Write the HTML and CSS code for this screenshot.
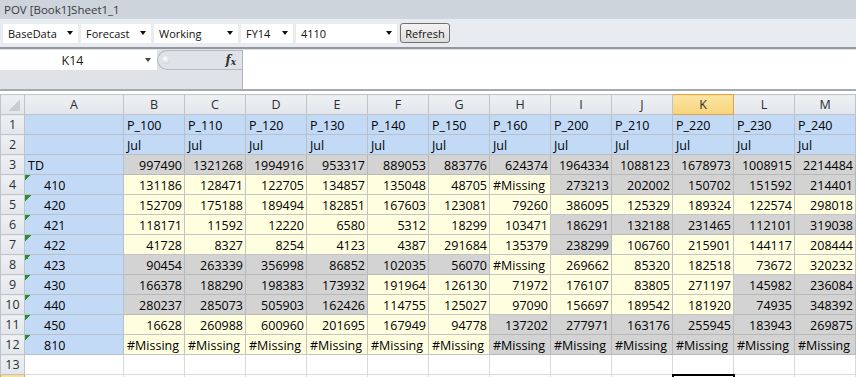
FILE: index.html
```html
<!DOCTYPE html>
<html lang="en">
<head>
    <meta charset="UTF-8">
    <title>POV [Book1]Sheet1_1</title>
    <link rel="stylesheet" href="styles.css">
</head>
<body>

    <!-- POV toolbar -->
    <div class="pov-title">POV [Book1]Sheet1_1</div>
    <div class="pov-bar">
        <div class="dd dd-base"><span>BaseData</span><i class="arrow"></i></div>
        <div class="dd dd-scen"><span>Forecast</span><i class="arrow"></i></div>
        <div class="dd dd-ver"><span>Working</span><i class="arrow"></i></div>
        <div class="dd dd-year"><span>FY14</span><i class="arrow"></i></div>
        <div class="dd dd-ent"><span>4110</span><i class="arrow"></i></div>
        <button class="refresh">Refresh</button>
    </div>

    <!-- formula bar -->
    <div class="fbar">
        <div class="namebox"><span class="cellref">K14</span><i class="arrow"></i></div>
        <div class="fx-panel"><span class="grip"></span><span class="fx">f<sub>x</sub></span></div>
        <div class="finput"></div>
    </div>

    <!-- sheet -->
    <table class="grid">
        <colgroup>
            <col class="c-rh"><col class="c-a">
            <col class="c-n"><col class="c-n"><col class="c-n"><col class="c-n"><col class="c-n"><col class="c-n">
            <col class="c-n"><col class="c-n"><col class="c-n"><col class="c-n"><col class="c-n"><col class="c-n">
        </colgroup>
        <tr class="hdr">
            <th class="corner"></th><th>A</th><th>B</th><th>C</th><th>D</th><th>E</th><th>F</th><th>G</th>
            <th>H</th><th>I</th><th>J</th><th class="sel">K</th><th>L</th><th>M</th>
        </tr>
        <tr>
            <th class="rh">1</th><td class="m"></td>
            <td class="m">P_100</td><td class="m">P_110</td><td class="m">P_120</td><td class="m">P_130</td>
            <td class="m">P_140</td><td class="m">P_150</td><td class="m">P_160</td><td class="m">P_200</td>
            <td class="m">P_210</td><td class="m">P_220</td><td class="m">P_230</td><td class="m">P_240</td>
        </tr>
        <tr>
            <th class="rh">2</th><td class="m"></td>
            <td class="m">Jul</td><td class="m">Jul</td><td class="m">Jul</td><td class="m">Jul</td>
            <td class="m">Jul</td><td class="m">Jul</td><td class="m">Jul</td><td class="m">Jul</td>
            <td class="m">Jul</td><td class="m">Jul</td><td class="m">Jul</td><td class="m">Jul</td>
        </tr>
        <tr>
            <th class="rh">3</th><td class="m">TD</td>
            <td class="r n">997490</td><td class="r n">1321268</td><td class="r n">1994916</td><td class="r n">953317</td>
            <td class="r n">889053</td><td class="r n">883776</td><td class="r n">624374</td><td class="r n">1964334</td>
            <td class="r n">1088123</td><td class="r n">1678973</td><td class="r n">1008915</td><td class="r n">2214484</td>
        </tr>
        <tr>
            <th class="rh">4</th><td class="m lbl">410</td>
            <td class="w n">131186</td><td class="w n">128471</td><td class="w n">122705</td><td class="w n">134857</td>
            <td class="w n">135048</td><td class="w n">48705</td><td class="w">#Missing</td><td class="r n">273213</td>
            <td class="r n">202002</td><td class="r n">150702</td><td class="r n">151592</td><td class="r n">214401</td>
        </tr>
        <tr>
            <th class="rh">5</th><td class="m lbl">420</td>
            <td class="w n">152709</td><td class="w n">175188</td><td class="w n">189494</td><td class="w n">182851</td>
            <td class="w n">167603</td><td class="w n">123081</td><td class="w n">79260</td><td class="w n">386095</td>
            <td class="w n">125329</td><td class="w n">189324</td><td class="w n">122574</td><td class="w n">298018</td>
        </tr>
        <tr>
            <th class="rh">6</th><td class="m lbl">421</td>
            <td class="w n">118171</td><td class="w n">11592</td><td class="w n">12220</td><td class="w n">6580</td>
            <td class="w n">5312</td><td class="w n">18299</td><td class="w n">103471</td><td class="r n">186291</td>
            <td class="r n">132188</td><td class="r n">231465</td><td class="r n">112101</td><td class="r n">319038</td>
        </tr>
        <tr>
            <th class="rh">7</th><td class="m lbl">422</td>
            <td class="w n">41728</td><td class="w n">8327</td><td class="w n">8254</td><td class="w n">4123</td>
            <td class="w n">4387</td><td class="w n">291684</td><td class="w n">135379</td><td class="r n">238299</td>
            <td class="w n">106760</td><td class="w n">215901</td><td class="w n">144117</td><td class="w n">208444</td>
        </tr>
        <tr>
            <th class="rh">8</th><td class="m lbl">423</td>
            <td class="r n">90454</td><td class="r n">263339</td><td class="r n">356998</td><td class="r n">86852</td>
            <td class="r n">102035</td><td class="r n">56070</td><td class="w">#Missing</td><td class="w n">269662</td>
            <td class="w n">85320</td><td class="w n">182518</td><td class="w n">73672</td><td class="w n">320232</td>
        </tr>
        <tr>
            <th class="rh">9</th><td class="m lbl">430</td>
            <td class="r n">166378</td><td class="r n">188290</td><td class="r n">198383</td><td class="r n">173932</td>
            <td class="w n">191964</td><td class="w n">126130</td><td class="w n">71972</td><td class="w n">176107</td>
            <td class="w n">83805</td><td class="w n">271197</td><td class="r n">145982</td><td class="r n">236084</td>
        </tr>
        <tr>
            <th class="rh">10</th><td class="m lbl">440</td>
            <td class="r n">280237</td><td class="r n">285073</td><td class="r n">505903</td><td class="r n">162426</td>
            <td class="w n">114755</td><td class="w n">125027</td><td class="w n">97090</td><td class="w n">156697</td>
            <td class="w n">189542</td><td class="w n">181920</td><td class="r n">74935</td><td class="r n">348392</td>
        </tr>
        <tr>
            <th class="rh">11</th><td class="m lbl">450</td>
            <td class="w n">16628</td><td class="w n">260988</td><td class="w n">600960</td><td class="w n">201695</td>
            <td class="w n">167949</td><td class="w n">94778</td><td class="r n">137202</td><td class="r n">277971</td>
            <td class="r n">163176</td><td class="r n">255945</td><td class="r n">183943</td><td class="r n">269875</td>
        </tr>
        <tr>
            <th class="rh">12</th><td class="m lbl">810</td>
            <td class="w">#Missing</td><td class="w">#Missing</td><td class="w">#Missing</td><td class="w">#Missing</td>
            <td class="w">#Missing</td><td class="w">#Missing</td><td class="r">#Missing</td><td class="r">#Missing</td>
            <td class="r">#Missing</td><td class="r">#Missing</td><td class="r">#Missing</td><td class="r">#Missing</td>
        </tr>
        <tr>
            <th class="rh">13</th><td></td>
            <td></td><td></td><td></td><td></td><td></td><td></td>
            <td></td><td></td><td></td><td></td><td></td><td></td>
        </tr>
        <tr>
            <th class="rh sel">14</th><td></td>
            <td></td><td></td><td></td><td></td><td></td><td></td>
            <td></td><td></td><td></td><td class="act"></td><td></td><td></td>
        </tr>
    </table>

</body>
</html>
```

FILE: styles.css
```css
body {
    margin: 0;
    width: 856px;
    height: 377px;
    overflow: hidden;
    background: #ffffff;
    font-family: "Open Sans", sans-serif;
}

/* POV toolbar */
.pov-title {
    height: 19px;
    line-height: 19px;
    padding-left: 4px;
    background: #cdd4dc;
    color: #3a3a3a;
    font-size: 11.5px;
}
.pov-bar {
    height: 28px;
    display: flex;
    align-items: center;
    gap: 3px;
    padding-left: 3px;
    background: #e8ebef;
    border-bottom: 2px solid #93989e;
}
.dd {
    height: 19px;
    box-sizing: border-box;
    display: flex;
    align-items: center;
    justify-content: space-between;
    padding: 0 5px;
    background: #ffffff;
    color: #111111;
    font-size: 11px;
}
.dd-base { width: 75px; }
.dd-scen { width: 70px; }
.dd-ver { width: 84px; }
.dd-year { width: 52px; }
.dd-ent { width: 101px; }
.arrow {
    width: 0;
    height: 0;
    border-left: 3.5px solid transparent;
    border-right: 3.5px solid transparent;
    border-top: 4px solid #111111;
}
.refresh {
    width: 50px;
    height: 20px;
    padding: 0;
    border: 1px solid #707070;
    border-radius: 3px;
    background: linear-gradient(#f4f4f4, #dddddd);
    color: #111111;
    font-family: "Open Sans", sans-serif;
    font-size: 11px;
}

/* formula bar */
.fbar {
    height: 40px;
    display: flex;
    align-items: flex-start;
    background: #dfe3e8;
    border-bottom: 2px solid #a5aaaf;
}
.namebox {
    width: 157px;
    height: 20px;
    margin-top: 1px;
    display: flex;
    align-items: center;
    background: #ffffff;
}
.cellref {
    flex: 1;
    text-align: center;
    font-size: 12.5px;
    color: #1e1e1e;
}
.namebox .arrow {
    margin-right: 6px;
    border-top-color: #444444;
}
.fx-panel {
    width: 85px;
    height: 20px;
    margin-top: 1px;
    box-sizing: border-box;
    display: flex;
    align-items: center;
    justify-content: space-between;
    padding: 0 6px 0 4px;
    border: 1px solid #b5bac0;
    border-right: none;
    border-radius: 10px 0 0 10px;
}
.grip {
    width: 8px;
    height: 8px;
    border-radius: 50%;
    background: radial-gradient(circle at 40% 35%, #ffffff, #c3c8ce);
}
.fx {
    font-family: "DejaVu Serif", serif;
    font-style: italic;
    font-weight: bold;
    font-size: 12px;
    color: #333333;
}
.fx sub {
    font-size: 9px;
    vertical-align: -1px;
}
.finput {
    flex: 1;
    height: 39px;
    margin-top: 1px;
    background: #ffffff;
    border-left: 1px solid #b0b5bb;
}

/* sheet grid */
.grid {
    margin-top: 3px;
    border-collapse: collapse;
    table-layout: fixed;
    width: 855px;
    font-size: 12.5px;
    color: #000000;
}
.c-rh { width: 24px; }
.c-a { width: 99px; }
.c-n { width: 61px; }

.grid tr {
    height: 20px;
}
.grid td,
.grid th {
    padding: 0 2px 0 3px;
    border: 1px solid #d9d9d9;
    white-space: nowrap;
    overflow: hidden;
    vertical-align: bottom;
    line-height: 17px;
    font-weight: normal;
    text-align: left;
}
.grid th {
    padding: 0;
    text-align: center;
    vertical-align: middle;
    background: linear-gradient(#eef1f4, #e2e6eb);
    border-color: #bfc4ca;
    color: #2e2e2e;
}
.grid th.corner {
    background: linear-gradient(135deg, transparent 50%, #c9cdd2 50%) no-repeat right 4px bottom 3px / 11px 11px,
                linear-gradient(#eef1f4, #e2e6eb);
}
.grid th.sel {
    background: linear-gradient(#fbe5a2, #f8d37c);
    border-color: #e2a246;
}

/* Smart View cell styles */
.grid td.m {
    background: #c3daf7;
    border-color: #b9c0c8;
}
.grid td.r {
    background: #d3d3d3;
    border-color: #b8b8b8;
}
.grid td.w {
    background: #ffffe0;
    border-color: #c4c4c4;
}
.grid td.n {
    text-align: right;
}
.grid td.lbl {
    padding-left: 19px;
    background: linear-gradient(135deg, #2d8c2d 50%, transparent 50%) no-repeat left top / 6px 6px,
                #c3daf7;
}
.grid td.act {
    border: 2px solid #000000;
}
```
